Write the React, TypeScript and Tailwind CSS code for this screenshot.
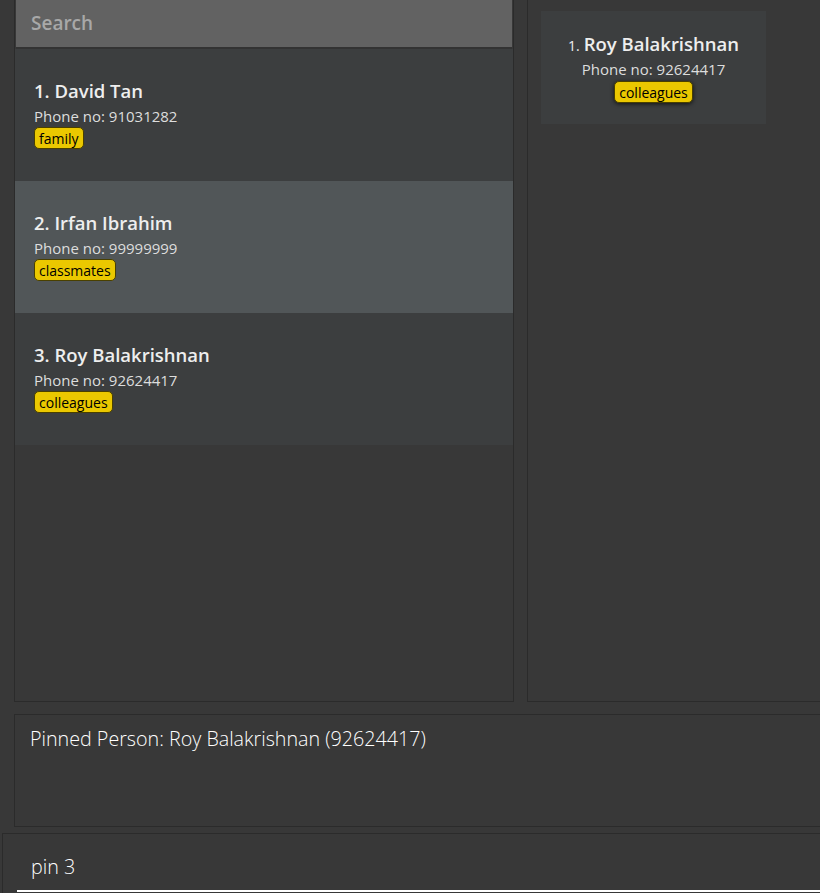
import React from 'react';

type Person = { name: string; phone: string; tag: string };

const people: Person[] = [
  { name: 'David Tan', phone: '91031282', tag: 'family' },
  { name: 'Irfan Ibrahim', phone: '99999999', tag: 'classmates' },
  { name: 'Roy Balakrishnan', phone: '92624417', tag: 'colleagues' },
];

const font = { fontFamily: '"Open Sans", "Noto Sans", sans-serif' };

function Tag({ label, shadow }: { label: string; shadow?: boolean }) {
  return (
    <span
      className={
        'inline-flex items-center h-[22px] px-[4px] rounded-[5px] border border-[#4a4000] bg-[#ebc800] text-[14px] text-black ' +
        (shadow ? 'shadow-[0_1px_4px_rgba(0,0,0,0.7)]' : '')
      }
    >
      {label}
    </span>
  );
}

function PersonCard({ index, person, selected }: { index: number; person: Person; selected: boolean }) {
  return (
    <div className={'h-[132px] pl-[19px] pt-[29px] ' + (selected ? 'bg-[#515658]' : 'bg-[#3c3e3f]')}>
      <div className="text-[18.5px] font-semibold leading-[26px] text-[#eeeeee]">
        {index}. {person.name}
      </div>
      <div className="text-[15px] leading-[20px] text-[#dddddd] mt-[2px]">Phone no: {person.phone}</div>
      <div className="mt-[1px] flex">
        <Tag label={person.tag} />
      </div>
    </div>
  );
}

export default function App() {
  return (
    <div className="w-[820px] h-[893px] overflow-hidden bg-[#383838] flex flex-col" style={font}>
      <div className="h-[702px] flex pl-[14px] shrink-0">
        {/* person list */}
        <div className="w-[500px] border-x border-b border-[#2b2b2b] flex flex-col">
          <div className="h-[49px] mx-[1px] bg-[#626262] border-b-2 border-[#333333] pl-[15px] pt-[9px] text-[19px] font-semibold text-[#a8a8a8]">
            Search
          </div>
          {people.map((p, i) => (
            <PersonCard key={p.name} index={i + 1} person={p} selected={i === 1} />
          ))}
        </div>

        {/* pinned panel */}
        <div className="ml-[13px] flex-1 border-l border-b border-[#2b2b2b] pl-[13px] pt-[11px]">
          <div className="w-[225px] h-[113px] bg-[#3c3e3f] flex flex-col items-center pt-[20px]">
            <div className="flex items-baseline text-[#eeeeee]">
              <span className="text-[14px] mr-[4px]">1.</span>
              <span className="text-[18.5px] font-semibold leading-[26px]">Roy Balakrishnan</span>
            </div>
            <div className="text-[15px] leading-[20px] text-[#dddddd] mt-[2px]">Phone no: 92624417</div>
            <div className="mt-[2px] flex">
              <Tag label="colleagues" shadow />
            </div>
          </div>
        </div>
      </div>

      {/* result display */}
      <div className="mt-[12px] ml-[14px] h-[113px] border border-r-0 border-[#2b2b2b] pl-[15px] pt-[9px] text-[19.7px] font-light text-white shrink-0">
        Pinned Person: Roy Balakrishnan (92624417)
      </div>

      {/* command box */}
      <div className="mt-[6px] ml-[2px] flex-1 border-t border-l border-[#2b2b2b] relative">
        <div className="pl-[28px] pt-[18px] text-[19.7px] font-light text-white">pin 3</div>
        <div className="absolute left-[14px] right-0 bottom-[1px] h-[2px] bg-white" />
      </div>
    </div>
  );
}
